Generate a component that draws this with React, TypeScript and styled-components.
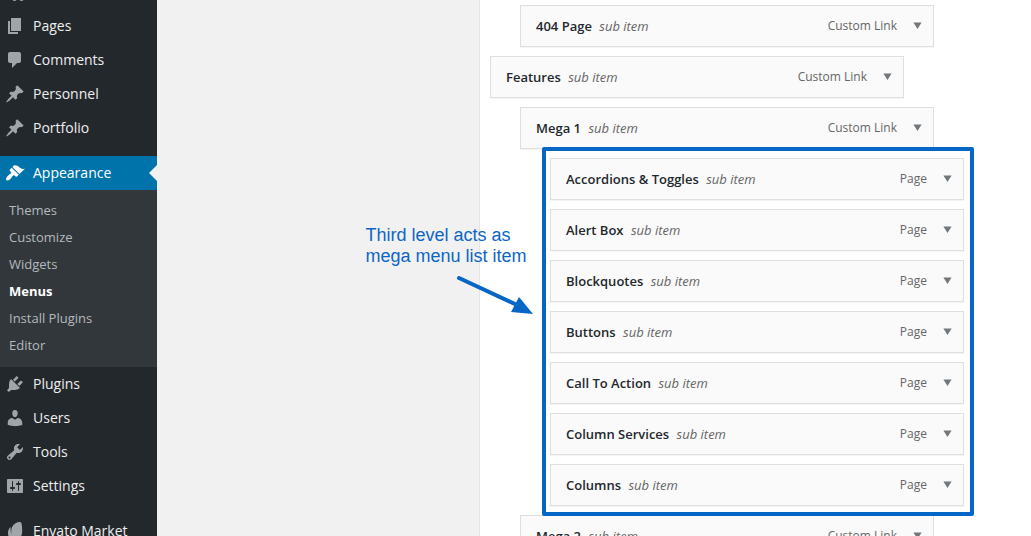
import React from "react";
import styled, { createGlobalStyle, css } from "styled-components";

const GlobalStyle = createGlobalStyle`
  * { box-sizing: border-box; }
  html, body { margin: 0; height: 100%; overflow: hidden; }
  body {
    background: #f1f1f1;
    font-family: "Open Sans", "Liberation Sans", sans-serif;
    font-size: 13px;
  }
`;

const Screen = styled.div`
  position: relative;
  display: flex;
  width: 1031px;
  height: 536px;
  overflow: hidden;
  background: #f1f1f1;
`;

const Sidebar = styled.nav`
  flex: 0 0 157px;
  height: 536px;
  overflow: hidden;
  background: #23282d;
`;

const MenuGroup = styled.ul<{ $first?: boolean }>`
  list-style: none;
  margin: ${(p) => (p.$first ? "-25px" : "0")} 0 0;
  padding: 0;
`;

const Separator = styled.div`
  height: 11px;
`;

const MenuRow = styled.li<{ $active?: boolean }>`
  display: flex;
  align-items: center;
  gap: 8px;
  height: 34px;
  padding-left: 5px;
  font-size: 14px;
  line-height: 18px;
  color: ${(p) => (p.$active ? "#fff" : "#eee")};
  ${(p) =>
    p.$active &&
    css`
      background: #0073aa;
    `}
`;

const Notch = styled.span`
  margin-left: auto;
  border: 8px solid transparent;
  border-left-width: 0;
  border-right-color: #f1f1f1;
`;

const MenuIcon = styled.svg<{ $active?: boolean }>`
  flex: none;
  width: 20px;
  height: 20px;
  fill: ${(p) => (p.$active ? "#fff" : "#a0a5aa")};
`;

const Submenu = styled.ul`
  list-style: none;
  margin: 0;
  padding: 7px 0 8px;
  background: #32373c;
`;

const SubmenuRow = styled.li<{ $current?: boolean }>`
  height: 27px;
  padding-left: 9px;
  line-height: 26px;
  color: ${(p) => (p.$current ? "#fff" : "#b4b9be")};
  font-weight: ${(p) => (p.$current ? 700 : 400)};
`;

const Gutter = styled.div`
  flex: 0 0 322px;
`;

const Panel = styled.main`
  flex: 1;
  padding: 5px 0 0 10px;
  border-left: 1px solid #e5e5e5;
  background: #fff;
`;

const ItemList = styled.ul`
  display: flex;
  flex-direction: column;
  gap: 9px;
  margin: 0;
  padding: 0;
  list-style: none;
`;

const Item = styled.li<{ $depth: number }>`
  display: flex;
  align-items: center;
  flex: none;
  width: 414px;
  height: 42px;
  margin-left: ${(p) => p.$depth * 30}px;
  padding: 0 11px 0 15px;
  border: 1px solid #dfdfdf;
  background: #fafafa;
  box-shadow: 0 1px 1px rgba(0, 0, 0, 0.04);
`;

const ItemTitle = styled.span`
  font-weight: 600;
  color: #23282d;
`;

const ItemNote = styled.span`
  margin-left: 7.4px;
  font-style: italic;
  color: #666;
`;

const ItemType = styled.span`
  margin-left: auto;
  padding-bottom: 1px;
  font-size: 12px;
  color: #666;
`;

const Caret = styled.svg`
  flex: none;
  width: 9px;
  height: 7px;
  margin: 0 0 1px 16px;
  fill: #72777c;
`;

const HighlightFrame = styled.div`
  position: absolute;
  left: 542px;
  top: 147px;
  width: 432px;
  height: 369px;
  border: 4px solid #0566c6;
  border-radius: 2px;
`;

const Annotation = styled.p`
  position: absolute;
  left: 365.500px;
  top: 225px;
  margin: 0;
  font-family: "Liberation Sans", sans-serif;
  font-size: 18px;
  line-height: 21px;
  white-space: nowrap;
  color: #0c66c6;
`;

const Arrow = styled.svg`
  position: absolute;
  left: 450px;
  top: 270px;
`;

const icons = {
  media:
    "M13 11V4c0-.55-.45-1-1-1h-1.67L9 1H5L3.67 3H2c-.55 0-1 .45-1 1v7c0 .55.45 1 1 1h10c.55 0 1-.45 1-1zM7 4.5c1.38 0 2.5 1.12 2.5 2.5S8.38 9.5 7 9.5 4.5 8.38 4.5 7 5.62 4.5 7 4.5zM14 6h5v10.5c0 1.38-1.12 2.5-2.5 2.5S14 17.88 14 16.5s1.12-2.5 2.5-2.5c.17 0 .34.02.5.05V9h-3V6zm-4 8.05V13h2v3.5c0 1.38-1.12 2.5-2.5 2.5S7 17.88 7 16.5 8.12 14 9.5 14c.17 0 .34.02.5.05z",
  page: "M6 15V2h10v13H6zm-1 1h8v2H3V5h2v11z",
  comment:
    "M5 2h9c1.1 0 2 .9 2 2v7c0 1.1-.9 2-2 2h-2l-5 5v-5H5c-1.1 0-2-.9-2-2V4c0-1.1.9-2 2-2z",
  pin: "M10.44 3.02l1.82-1.82 6.36 6.35-1.83 1.82c-1.05-.68-2.48-.57-3.41.36l-.75.75c-.92.93-1.04 2.35-.35 3.41l-1.83 1.82-2.41-2.41-2.8 2.79c-.42.42-3.38 2.71-3.8 2.29s1.86-3.39 2.28-3.81l2.79-2.79L4.1 9.36l1.83-1.82c1.05.69 2.48.57 3.4-.36l.75-.75c.93-.92 1.05-2.35.36-3.41z",
  brush:
    "M14.48 11.06L7.41 3.99l1.5-1.5c.5-.56 2.3-.47 3.51.32 1.21.8 1.43 1.28 2.91 2.1 1.18.64 2.45 1.26 4.45.85zm-.71.71L6.7 4.7 4.93 6.47c-.39.39-.39 1.02 0 1.41l1.06 1.06c.39.39.39 1.03 0 1.42-.6.6-1.43 1.11-2.21 1.69-.35.26-.7.53-1.01.84C1.43 14.23.4 16.08 1.4 17.07c.99 1 2.84-.03 4.18-1.36.31-.31.58-.66.85-1.02.57-.78 1.08-1.61 1.69-2.21.39-.39 1.02-.39 1.41 0l1.06 1.06c.39.39 1.02.39 1.41 0z",
  plug: "M13.11 4.36L9.87 7.6 8 5.73l3.24-3.24c.35-.34 1.05-.2 1.56.32.52.51.66 1.21.31 1.55zm-8 1.77l.91-1.12 9.01 9.01-1.19.84c-.71.71-2.63 1.16-3.82 1.16H6.14L4.9 17.26c-.59.59-1.54.59-2.12 0-.59-.58-.59-1.53 0-2.12l1.24-1.24v-3.88c0-1.13.4-3.19 1.09-3.89zm7.26 3.97l3.24-3.24c.34-.35 1.04-.21 1.55.31.52.51.66 1.21.31 1.55l-3.24 3.25z",
  user: "M10 9.25c-2.27 0-2.73-3.44-2.73-3.44C7 4.02 7.82 2 9.97 2c2.16 0 2.98 2.02 2.71 3.81 0 0-.41 3.44-2.68 3.44zm0 2.57L12.72 10c2.39 0 4.52 2.33 4.52 4.53v2.49s-3.65 1.13-7.24 1.13c-3.65 0-7.24-1.13-7.24-1.13v-2.49c0-2.25 1.94-4.48 4.47-4.48z",
  wrench:
    "M16.68 9.77c-1.34 1.34-3.3 1.67-4.95.99l-5.41 6.52c-.99.99-2.59.99-3.58 0s-.99-2.59 0-3.57l6.52-5.42c-.68-1.65-.35-3.61.99-4.95 1.28-1.28 3.12-1.62 4.72-1.06l-2.89 2.89 2.82 2.82 2.86-2.87c.53 1.58.18 3.39-1.08 4.65zM3.81 16.21c.4.39 1.04.39 1.43 0 .4-.4.4-1.04 0-1.43-.39-.4-1.03-.4-1.43 0-.39.39-.39 1.03 0 1.43z",
  sliders:
    "M18 16V4c0-.55-.45-1-1-1H3c-.55 0-1 .45-1 1v12c0 .55.45 1 1 1h14c.55 0 1-.45 1-1zM8 11h1c.55 0 1 .45 1 1s-.45 1-1 1H8v1.5c0 .28-.22.5-.5.5s-.5-.22-.5-.5V13H6c-.55 0-1-.45-1-1s.45-1 1-1h1V5.500c0-.28.22-.5.5-.5s.5.22.5.5V11zm5-2h-1c-.55 0-1-.45-1-1s.45-1 1-1h1V5.500c0-.28.22-.5.5-.5s.5.22.5.5V7h1c.55 0 1 .45 1 1s-.45 1-1 1h-1v5.500c0 .28-.22.5-.5.5s-.5-.22-.5-.5V9z",
  leaf: "M15.800 1.200C13.500.3 9 2.300 7.200 5.800c-1.300 2.600-1.200 5.200-.5 7.700C5.800 11.600 5.400 9.600 5.700 7c.1-.9-.4-1-.9-.3C3.200 8.800 2.600 11.300 3.100 13.800 3.800 17 6.600 19 9.700 19c4 0 7-2.900 7.400-7.300.3-3.700-.1-9.700-1.300-10.500z",
};

type IconName = keyof typeof icons;

const Entry = ({ icon, label, active }: { icon: IconName; label: string; active?: boolean }) => (
  <MenuRow $active={active}>
    <MenuIcon viewBox="0 0 20 20" $active={active} aria-hidden="true">
      <path d={icons[icon]} />
    </MenuIcon>
    {label && <span>{label}</span>}
    {active && <Notch />}
  </MenuRow>
);

const submenu = ["Themes", "Customize", "Widgets", "Menus", "Install Plugins", "Editor"];

const items = [
  { title: "404 Page", type: "Custom Link", depth: 1 },
  { title: "Features", type: "Custom Link", depth: 0 },
  { title: "Mega 1", type: "Custom Link", depth: 1 },
  { title: "Accordions & Toggles", type: "Page", depth: 2 },
  { title: "Alert Box", type: "Page", depth: 2 },
  { title: "Blockquotes", type: "Page", depth: 2 },
  { title: "Buttons", type: "Page", depth: 2 },
  { title: "Call To Action", type: "Page", depth: 2 },
  { title: "Column Services", type: "Page", depth: 2 },
  { title: "Columns", type: "Page", depth: 2 },
  { title: "Mega 2", type: "Custom Link", depth: 1 },
];

export default function App() {
  return (
    <>
      <GlobalStyle />
      <Screen>
        <Sidebar>
          <MenuGroup $first>
            <Entry icon="media" label="" />
            <Entry icon="page" label="Pages" />
            <Entry icon="comment" label="Comments" />
            <Entry icon="pin" label="Personnel" />
            <Entry icon="pin" label="Portfolio" />
          </MenuGroup>
          <Separator />
          <MenuGroup>
            <Entry icon="brush" label="Appearance" active />
          </MenuGroup>
          <Submenu>
            {submenu.map((name) => (
              <SubmenuRow key={name} $current={name === "Menus"}>
                {name}
              </SubmenuRow>
            ))}
          </Submenu>
          <MenuGroup>
            <Entry icon="plug" label="Plugins" />
            <Entry icon="user" label="Users" />
            <Entry icon="wrench" label="Tools" />
            <Entry icon="sliders" label="Settings" />
          </MenuGroup>
          <Separator />
          <MenuGroup>
            <Entry icon="leaf" label="Envato Market" />
          </MenuGroup>
        </Sidebar>
        <Gutter />
        <Panel>
          <ItemList>
            {items.map((item) => (
              <Item key={item.title} $depth={item.depth}>
                <ItemTitle>{item.title}</ItemTitle>
                <ItemNote>sub item</ItemNote>
                <ItemType>{item.type}</ItemType>
                <Caret viewBox="0 0 9 7" aria-hidden="true">
                  <polygon points="0.4,0.5 8.600,0.5 4.500,7" />
                </Caret>
              </Item>
            ))}
          </ItemList>
        </Panel>
        <HighlightFrame />
        <Annotation>
          Third level acts as
          <br />
          mega menu list item
        </Annotation>
        <Arrow width="86" height="48" viewBox="0 0 86 48" aria-hidden="true">
          <line x1="9" y1="8" x2="66" y2="34.500" stroke="#0566c6" strokeWidth="4" strokeLinecap="round" />
          <polygon points="69,27 83,44 61,42" fill="#0566c6" />
        </Arrow>
      </Screen>
    </>
  );
}
